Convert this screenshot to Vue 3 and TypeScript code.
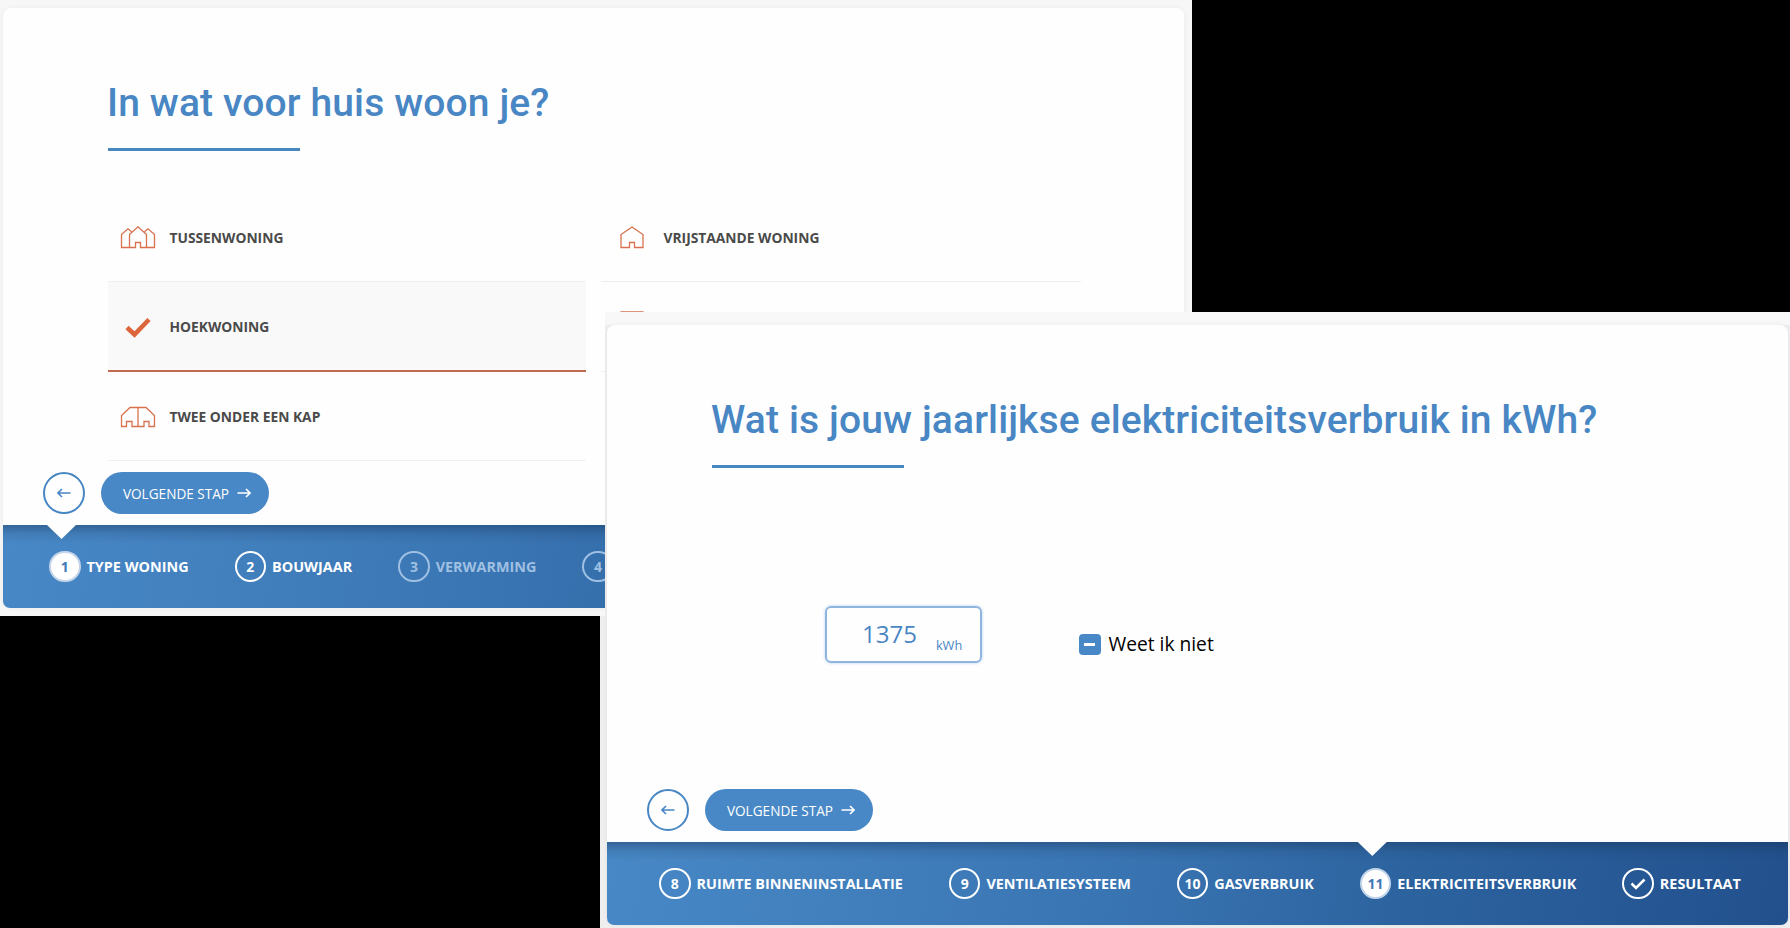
<script setup lang="ts">
interface Step {
  mark: string
  label: string
  state?: 'active' | 'muted'
}
interface Option {
  icon: 'row' | 'check' | 'pair' | 'house' | 'flat'
  label: string
  selected?: boolean
}

const options: Option[] = [
  { icon: 'row', label: 'Tussenwoning' },
  { icon: 'house', label: 'Vrijstaande woning' },
  { icon: 'check', label: 'Hoekwoning', selected: true },
  { icon: 'flat', label: '' },
  { icon: 'pair', label: 'Twee onder een kap' },
]

const firstSteps: Step[] = [
  { mark: '1', label: 'Type woning', state: 'active' },
  { mark: '2', label: 'Bouwjaar' },
  { mark: '3', label: 'Verwarming', state: 'muted' },
  { mark: '4', label: '', state: 'muted' },
]

const lastSteps: Step[] = [
  { mark: '8', label: 'Ruimte binneninstallatie' },
  { mark: '9', label: 'Ventilatiesysteem' },
  { mark: '10', label: 'Gasverbruik' },
  { mark: '11', label: 'Elektriciteitsverbruik', state: 'active' },
  { mark: 'check', label: 'Resultaat' },
]

const cards = [
  { id: 'house', title: 'In wat voor huis woon je?', steps: firstSteps },
  { id: 'power', title: 'Wat is jouw jaarlijkse elektriciteitsverbruik in kWh?', steps: lastSteps },
]
</script>

<template>
  <main class="desk">
    <section v-for="card in cards" :key="card.id" class="window" :class="card.id">
      <div class="card">
        <h1 class="title">{{ card.title }}</h1>
        <div class="rule"></div>

        <div v-if="card.id === 'house'" class="options">
          <div v-for="(o, i) in options" :key="i" class="option" :class="{ selected: o.selected }">
            <span class="option-icon" :class="o.icon">
              <svg v-if="o.icon === 'row'" class="line" width="36" height="24" viewBox="0 0 36 24">
                <path d="M9.5 21.5H1.5V8.5L8 2.8L11.5 5.8M26.5 21.5H34.5V8.5L28 2.8L24.5 5.8M15.5 21.5H9.5V8.500L18 .8L26.5 8.5V21.5H20.5V16.5H15.5Z" />
              </svg>
              <svg v-else-if="o.icon === 'pair'" class="line" width="36" height="24" viewBox="0 0 36 24">
                <path d="M18 1.5H10L1.500 9.5V20.5H6.500V15.5H12V20.5H24V15.5H29V20.5H34.5V9.5L26 1.5H18V20.5" />
              </svg>
              <svg v-else-if="o.icon === 'house'" class="line" width="26" height="24" viewBox="0 0 26 24">
                <path d="M10.5 21.500H2V8.5L13 1L24 8.5V21.5H15.5V16.5H10.5Z" />
              </svg>
              <svg v-else-if="o.icon === 'flat'" class="line" width="26" height="30" viewBox="0 0 26 30">
                <path d="M2 1H24V28.5H2Z" />
              </svg>
              <svg v-else width="28" height="22" viewBox="0 0 28 22">
                <path class="tick" d="M3 10.5L10.500 17.5L25 2.500" />
              </svg>
            </span>
            <span>{{ o.label }}</span>
          </div>
        </div>

        <div v-else class="question">
          <label class="amount"><span class="value">1375</span><span class="unit">kWh</span></label>
          <label class="unknown"><span class="box"><i></i></span>Weet ik niet</label>
        </div>

        <div class="actions">
          <button class="back" type="button">
            <svg width="14" height="10" viewBox="0 0 14 10"><path d="M13.5 5H1.200M5 1L1 5L5 9" /></svg>
          </button>
          <button class="next" type="button">
            Volgende stap
            <svg width="14" height="10" viewBox="0 0 14 10"><path d="M.5 5H12.800M9 1L13 5L9 9" /></svg>
          </button>
        </div>

        <nav class="steps">
          <div v-for="s in card.steps" :key="s.mark" class="step" :class="s.state">
            <span class="mark">
              <svg v-if="s.mark === 'check'" width="16" height="12" viewBox="0 0 16 12">
                <path d="M1.500 5.500L6 10L14.500 1.500" />
              </svg>
              <template v-else>{{ s.mark }}</template>
            </span>
            <span>{{ s.label }}</span>
          </div>
        </nav>
      </div>
    </section>
  </main>
</template>

<style>
body {
  background: #000;
  overflow: hidden;
}
</style>

<style scoped>
.desk {
  position: relative;
  width: 1790px;
  height: 928px;
  overflow: hidden;
  background: #000;
  font-family: "Open Sans", "Noto Sans", sans-serif;
}
.window {
  position: absolute;
  box-sizing: border-box;
  background: #f7f7f7;
  overflow: hidden;
}
.window.house {
  left: 0;
  top: 0;
  width: 1192px;
  height: 616px;
  padding: 8px 0 0 3px;
}
.window.power {
  left: 600px;
  top: 312px;
  width: 1190px;
  height: 616px;
  padding: 13px 0 0 7px;
  background: linear-gradient(#f8f8f8 0 13px, #efefef 13px);
  clip-path: polygon(5px 0, 100% 0, 100% 100%, 0 100%, 0 304px, 5px 304px);
}
.card {
  display: flex;
  flex-direction: column;
  width: 1181px;
  height: 600px;
  background: #fefefe;
  border-radius: 8px;
  box-shadow: 0 0 5px rgba(0, 0, 0, 0.06);
}
.title {
  margin: 68px 0 0 104px;
  font: 500 39px/55px Roboto, "Open Sans", sans-serif;
  letter-spacing: 0.13px;
  color: #4886c4;
  white-space: nowrap;
}
.rule {
  flex: none;
  width: 192px;
  height: 3px;
  margin: 16.500px 0 0 104.500px;
  background: #4886c0;
}
.options {
  flex: 1;
  display: grid;
  grid-template-columns: 478px 480px;
  grid-auto-rows: 89.600px;
  column-gap: 15px;
  margin: 42px 0 0 104.500px;
}
.option {
  display: flex;
  align-items: center;
  box-sizing: border-box;
  padding-top: 1px;
  border-bottom: 1px solid #efefef;
  font-size: 13.800px;
  font-weight: 700;
  text-transform: uppercase;
  color: #4a4a4a;
}
.option.selected {
  padding-top: 2px;
  background: #f9f9f9;
  border-bottom: 2px solid #c26a50;
}
.option-icon {
  display: flex;
  justify-content: center;
  align-items: center;
  width: 36px;
  padding-top: 2px;
  margin: 0 14px 0 12px;
}
.option-icon.pair {
  padding-top: 4px;
}
.option-icon.flat {
  padding: 0 0 1px;
}
.option:nth-child(even) .option-icon {
  margin: 0 14px 0 13px;
}
.line {
  fill: none;
  stroke: #d9714f;
  stroke-width: 1.300;
}
.tick {
  fill: none;
  stroke: #dd653b;
  stroke-width: 4.600;
}
.question {
  flex: 1;
  display: flex;
  align-items: flex-start;
  padding: 138px 0 0 218px;
}
.amount {
  display: flex;
  align-items: baseline;
  box-sizing: border-box;
  width: 157px;
  height: 57px;
  padding: 9px 0 0 35px;
  border: 2px solid #8fb5de;
  border-radius: 6px;
  box-shadow: 0 0 3px rgba(120, 175, 235, 0.600);
  color: #4a86c4;
}
.value {
  font-size: 24px;
  line-height: 34px;
}
.unit {
  position: relative;
  top: 7px;
  margin-left: 19px;
  font-size: 12.800px;
}
.unknown {
  display: flex;
  align-items: center;
  gap: 8px;
  margin: 24.500px 0 0 97px;
  font-size: 19.200px;
  line-height: 28px;
  color: #000;
}
.box {
  display: flex;
  align-items: center;
  justify-content: center;
  width: 21.500px;
  height: 21px;
  border-radius: 4px;
  background: #4888c6;
}
.box i {
  width: 11px;
  height: 3px;
  background: #fff;
}
.actions {
  flex: none;
  display: flex;
  gap: 16px;
  height: 42px;
  margin: 0 0 11px 40px;
}
.back,
.next {
  display: flex;
  align-items: center;
  justify-content: center;
  box-sizing: border-box;
  height: 42px;
  padding: 0;
  border-radius: 21px;
  font: 500 13.600px "Open Sans", sans-serif;
  text-transform: uppercase;
}
.back {
  width: 42px;
  border: 2px solid #4886c4;
  background: transparent;
}
.next {
  width: 168px;
  gap: 8px;
  padding-left: 4px;
  border: 0;
  background: #4888c6;
  color: #fff;
}
.actions svg {
  fill: none;
  stroke: #4886c4;
  stroke-width: 1.600;
}
.actions .next svg {
  stroke: #fff;
}
.steps {
  flex: none;
  display: flex;
  align-items: center;
  gap: 46px;
  box-sizing: border-box;
  height: 83px;
  padding-left: 46px;
  overflow: hidden;
  border-radius: 0 0 7px 7px;
  background:
    linear-gradient(rgba(20, 50, 85, 0.400), rgba(20, 50, 85, 0.120) 9px, transparent 19px),
    linear-gradient(100deg, #4888c6 0%, #3a75b3 42%, #2c639f 68%, #22508d 100%);
}
.power .steps {
  padding-left: 52px;
}
.step {
  position: relative;
  display: flex;
  align-items: center;
  gap: 6px;
  height: 83px;
  font-size: 14.400px;
  font-weight: 700;
  text-transform: uppercase;
  white-space: nowrap;
  color: #fff;
}
.step.muted {
  color: #9fc0e2;
}
.mark {
  display: flex;
  align-items: center;
  justify-content: center;
  box-sizing: border-box;
  width: 31.500px;
  height: 31.500px;
  border: 2px solid currentColor;
  border-radius: 50%;
  font-size: 14px;
}
.mark svg {
  fill: none;
  stroke: #fff;
  stroke-width: 2.600;
}
.active .mark {
  border-color: #c3d5e9;
  background: #fff;
  color: #3f79b5;
}
.active::before {
  content: "";
  position: absolute;
  left: -2px;
  top: 0;
  width: 29px;
  height: 14px;
  background: #fefefe;
  clip-path: polygon(0 0, 100% 0, 50% 100%);
}
</style>
